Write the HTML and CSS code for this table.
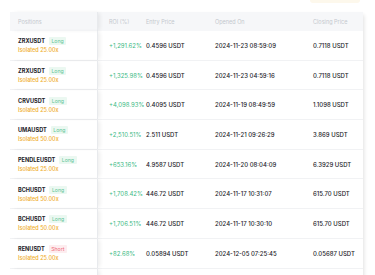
FILE: index.html
```html
<!DOCTYPE html>
<html lang="en">

<head>
    <meta charset="UTF-8">
    <title>Positions</title>
    <link rel="stylesheet" href="styles.css">
</head>

<body>
    <div class="topbar">
        <span class="topbtn"></span>
    </div>

    <section class="tabel">
        <div class="raekke hoved">
            <div class="celle fast">Positions</div>
            <div class="celle">ROI (%)</div>
            <div class="celle">Entry Price</div>
            <div class="celle">Opened On</div>
            <div class="celle">Closing Price</div>
        </div>

        <div class="raekke">
            <div class="celle fast">
                <p class="navn">ZRXUSDT <span class="tag long">Long</span></p>
                <p class="margin">Isolated 25.00x</p>
            </div>
            <div class="celle roi">+1,291.62%</div>
            <div class="celle">0.4596 USDT</div>
            <div class="celle">2024-11-23 08:59:09</div>
            <div class="celle">0.7118 USDT</div>
        </div>

        <div class="raekke">
            <div class="celle fast">
                <p class="navn">ZRXUSDT <span class="tag long">Long</span></p>
                <p class="margin">Isolated 25.00x</p>
            </div>
            <div class="celle roi">+1,325.98%</div>
            <div class="celle">0.4596 USDT</div>
            <div class="celle">2024-11-23 04:59:16</div>
            <div class="celle">0.7118 USDT</div>
        </div>

        <div class="raekke">
            <div class="celle fast">
                <p class="navn">CRVUSDT <span class="tag long">Long</span></p>
                <p class="margin">Isolated 25.00x</p>
            </div>
            <div class="celle roi">+4,098.93%</div>
            <div class="celle">0.4095 USDT</div>
            <div class="celle">2024-11-19 08:49:59</div>
            <div class="celle">1.1098 USDT</div>
        </div>

        <div class="raekke">
            <div class="celle fast">
                <p class="navn">UMAUSDT <span class="tag long">Long</span></p>
                <p class="margin">Isolated 50.00x</p>
            </div>
            <div class="celle roi">+2,510.51%</div>
            <div class="celle">2.511 USDT</div>
            <div class="celle">2024-11-21 09:26:29</div>
            <div class="celle">3.869 USDT</div>
        </div>

        <div class="raekke">
            <div class="celle fast">
                <p class="navn">PENDLEUSDT <span class="tag long">Long</span></p>
                <p class="margin">Isolated 25.00x</p>
            </div>
            <div class="celle roi">+653.16%</div>
            <div class="celle">4.9587 USDT</div>
            <div class="celle">2024-11-20 08:04:09</div>
            <div class="celle">6.3929 USDT</div>
        </div>

        <div class="raekke">
            <div class="celle fast">
                <p class="navn">BCHUSDT <span class="tag long">Long</span></p>
                <p class="margin">Isolated 50.00x</p>
            </div>
            <div class="celle roi">+1,708.42%</div>
            <div class="celle">446.72 USDT</div>
            <div class="celle">2024-11-17 10:31:07</div>
            <div class="celle">615.70 USDT</div>
        </div>

        <div class="raekke">
            <div class="celle fast">
                <p class="navn">BCHUSDT <span class="tag long">Long</span></p>
                <p class="margin">Isolated 50.00x</p>
            </div>
            <div class="celle roi">+1,706.51%</div>
            <div class="celle">446.72 USDT</div>
            <div class="celle">2024-11-17 10:30:10</div>
            <div class="celle">615.70 USDT</div>
        </div>

        <div class="raekke">
            <div class="celle fast">
                <p class="navn">RENUSDT <span class="tag short">Short</span></p>
                <p class="margin">Isolated 25.00x</p>
            </div>
            <div class="celle roi">+82.68%</div>
            <div class="celle">0.05894 USDT</div>
            <div class="celle">2024-12-05 07:25:45</div>
            <div class="celle">0.05687 USDT</div>
        </div>

        <div class="raekke">
            <div class="celle fast">
                <p class="navn">ATOMUSDT <span class="tag long">Long</span></p>
                <p class="margin">Isolated 25.00x</p>
            </div>
            <div class="celle roi">+155.10%</div>
            <div class="celle">9.004 USDT</div>
            <div class="celle">2024-12-02 01:32:28</div>
            <div class="celle">10.331 USDT</div>
        </div>
    </section>
</body>

</html>
```

FILE: styles.css
```css
body {
    margin: 0;
    padding: 0 0 0 10px;
    background-color: #ffffff;
    font-family: Inter, "Noto Sans", sans-serif;
    color: #1e2329;
}

p {
    margin: 0;
}

.topbar {
    display: flex;
    justify-content: flex-end;
    height: 12px;
    padding-right: 15px;
}

.topbtn {
    width: 50px;
    height: 3px;
    background-color: #fdf8ec;
    border-radius: 0 0 3px 3px;
}

.tabel {
    width: 353px;
    box-shadow: 4px 0 4px -3px rgba(0, 0, 0, 0.12);
}

.raekke {
    display: grid;
    grid-template-columns: 88px 48px 69px 98px 50px;
    height: 29.7px;
    box-sizing: border-box;
    border-bottom: 1px solid #f1f2f4;
    font-size: 6px;
    font-weight: 500;
}

.raekke.hoved {
    height: 19px;
    background-color: #f6f7f9;
    border-bottom: none;
    color: #c4c8ce;
    font-size: 5.5px;
    font-weight: 400;
}

.celle {
    display: flex;
    flex-direction: column;
    justify-content: center;
    white-space: nowrap;
}

.celle.fast {
    padding-left: 8px;
    border-right: 1px solid #e8eaed;
    box-shadow: 3px 0 4px -1px rgba(0, 0, 0, 0.07);
}

.raekke > .celle:nth-child(2) {
    padding-left: 11px;
}

.navn {
    font-weight: 700;
    font-size: 5.6px;
    display: flex;
    align-items: center;
    gap: 4px;
}

.tag {
    font-size: 5.2px;
    font-weight: 400;
    padding: 1px 2.5px;
    border-radius: 1px;
}

.long {
    color: #5cc495;
    background-color: #ebf8f1;
}

.short {
    color: #ef6a79;
    background-color: #fdedef;
}

.margin {
    margin-top: 2px;
    color: #efae2c;
    font-size: 5.5px;
    font-weight: 500;
}

.roi {
    color: #3dba85;
    font-weight: 400;
}
```
